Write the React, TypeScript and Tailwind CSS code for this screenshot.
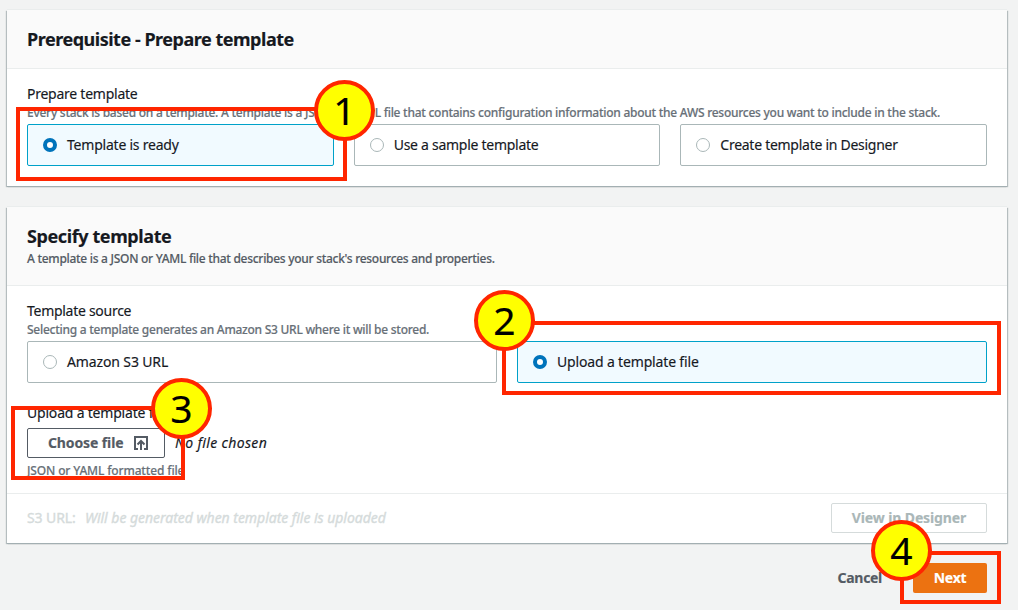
import type { ReactNode } from "react";

function Tile({ label, selected, tracking }: { label: string; selected?: boolean; tracking: string }) {
  return (
    <div
      className={`flex h-[42px] flex-1 items-center rounded-[2px] border pl-[15px] ${
        selected ? "border-[#00a1c9] bg-[#f1faff]" : "border-[#aab7b8] bg-white"
      }`}
    >
      <span
        className={`size-[14px] shrink-0 rounded-full bg-white ${
          selected ? "border-4 border-[#0073bb]" : "border border-[#aab7b8]"
        }`}
      />
      <span className={`ml-[10px] text-[14px] leading-[22px] whitespace-nowrap ${tracking}`}>{label}</span>
    </div>
  );
}

function Card({ children }: { children: ReactNode }) {
  return (
    <section className="bg-white shadow-[0_1px_0_0_#a3afb2,1px_1px_1px_0_rgba(0,28,36,0.25),-1px_1px_1px_0_rgba(0,28,36,0.25),0_-1px_0_0_#eaeded]">
      {children}
    </section>
  );
}

function Step({ n, box, circle }: { n: number; box: string; circle: string }) {
  return (
    <>
      <div className={`absolute border-4 border-[#ff2600] ${box}`} />
      <div
        className={`absolute flex size-[61px] items-center justify-center rounded-full border-4 border-[#ff2600] bg-[#ffff00] pb-[2px] text-[39px] leading-none text-black ${circle}`}
      >
        {n}
      </div>
    </>
  );
}

export default function App() {
  return (
    <div className="relative h-[610px] w-[1018px] overflow-hidden bg-[#f2f3f3] pt-[10px] pr-[11px] pl-[7px] font-['Noto_Sans',sans-serif] text-[#16191f] [-webkit-text-stroke:0.15px]">
      <div className="flex flex-col gap-[21px]">
        <Card>
          <header className="flex h-[59px] items-center border-b border-[#eaeded] bg-[#fafafa] px-5">
            <h2 className="text-[18px] leading-[22px] font-bold tracking-[-0.48px]">Prerequisite - Prepare template</h2>
          </header>
          <div className="h-[117px] px-5 pt-[14px]">
            <div className="text-[14px] leading-[22px] tracking-[-0.25px]">Prepare template</div>
            <div className="h-[19px] text-[12px] leading-[16px] font-medium tracking-[-0.263px] whitespace-nowrap text-[#687078]">
              Every stack is based on a template. A template is a JSON or YAML file that contains configuration information about the AWS resources you want to include in the stack.
            </div>
            <div className="flex gap-5">
              <Tile label="Template is ready" selected tracking="tracking-[-0.22px]" />
              <Tile label="Use a sample template" tracking="tracking-[-0.27px]" />
              <Tile label="Create template in Designer" tracking="tracking-[-0.27px]" />
            </div>
          </div>
        </Card>

        <Card>
          <header className="h-[79px] border-b border-[#eaeded] bg-[#fafafa] px-5 pt-[18px]">
            <h2 className="text-[18px] leading-[22px] font-bold tracking-[-0.4px]">Specify template</h2>
            <p className="mt-[4px] text-[12px] leading-[16px] font-medium tracking-[-0.29px] text-[#545b64]">
              A template is a JSON or YAML file that describes your stack's resources and properties.
            </p>
          </header>
          <div className="h-[207px] px-5 pt-[14px]">
            <div className="text-[14px] leading-[22px] tracking-[-0.28px]">Template source</div>
            <div className="h-[19px] text-[12px] leading-[16px] font-medium tracking-[-0.265px] text-[#687078]">
              Selecting a template generates an Amazon S3 URL where it will be stored.
            </div>
            <div className="flex gap-5">
              <Tile label="Amazon S3 URL" tracking="tracking-[-0.13px]" />
              <Tile label="Upload a template file" selected tracking="tracking-[-0.16px]" />
            </div>
            <div className="mt-[19px] text-[14px] leading-[22px] tracking-[-0.2px]">Upload a template file</div>
            <div className="mt-[4px] flex items-center">
              <button className="flex h-[30px] w-[138px] items-center rounded-[2px] border border-[#545b64] pl-5 text-[14px] font-bold tracking-[-0.12px] text-[#545b64]">
                <span className="w-[85px] pb-[2px] text-left whitespace-nowrap">Choose file</span>
                <svg className="size-4" viewBox="0 0 16 16" fill="none" stroke="currentColor" strokeWidth="2">
                  <path d="M5 14H2V2h12v12h-3M8 15V6M4.5 9.5 8 6l3.5 3.5" />
                </svg>
              </button>
              <span className="ml-[10px] pb-[2px] text-[14px] tracking-[0.35px] italic">No file chosen</span>
            </div>
            <div className="mt-[5px] text-[12px] leading-[16px] font-medium tracking-[-0.15px] text-[#687078]">
              JSON or YAML formatted file
            </div>
          </div>
          <footer className="flex h-[50px] items-center justify-between border-t border-[#eaeded] px-5">
            <div className="flex pb-[2px] text-[14px] text-[#d5dbdb] [-webkit-text-stroke:0.35px]">
              <span className="w-[58px] tracking-[-0.1px]">S3 URL:</span>
              <span className="tracking-[-0.03px] italic">Will be generated when template file is uploaded</span>
            </div>
            <button className="h-[30px] w-[156px] -translate-y-px rounded-[2px] border border-[#d5dbdb] text-[14px] font-bold tracking-[-0.12px] text-[#aab7b8]">
              View in Designer
            </button>
          </footer>
        </Card>
      </div>

      <div className="mt-5 flex items-center justify-end pr-5">
        <button className="mr-[31px] pb-[2px] text-[14px] font-bold tracking-[-0.3px] text-[#545b64]">Cancel</button>
        <button className="h-[30px] w-[74px] rounded-[2px] bg-[#ec7211] pb-[2px] text-[14px] font-bold tracking-[-0.3px] text-white">
          Next
        </button>
      </div>

      <Step n={1} box="left-[16px] top-[107px] h-[74px] w-[331px]" circle="left-[314px] top-[80px]" />
      <Step n={2} box="left-[502px] top-[321px] h-[74px] w-[499px]" circle="left-[474px] top-[290px]" />
      <Step n={3} box="left-[11px] top-[406px] h-[74px] w-[174px]" circle="left-[151px] top-[378px]" />
      <Step n={4} box="left-[900px] top-[551px] h-[53px] w-[101px]" circle="left-[871px] top-[520px]" />
    </div>
  );
}
